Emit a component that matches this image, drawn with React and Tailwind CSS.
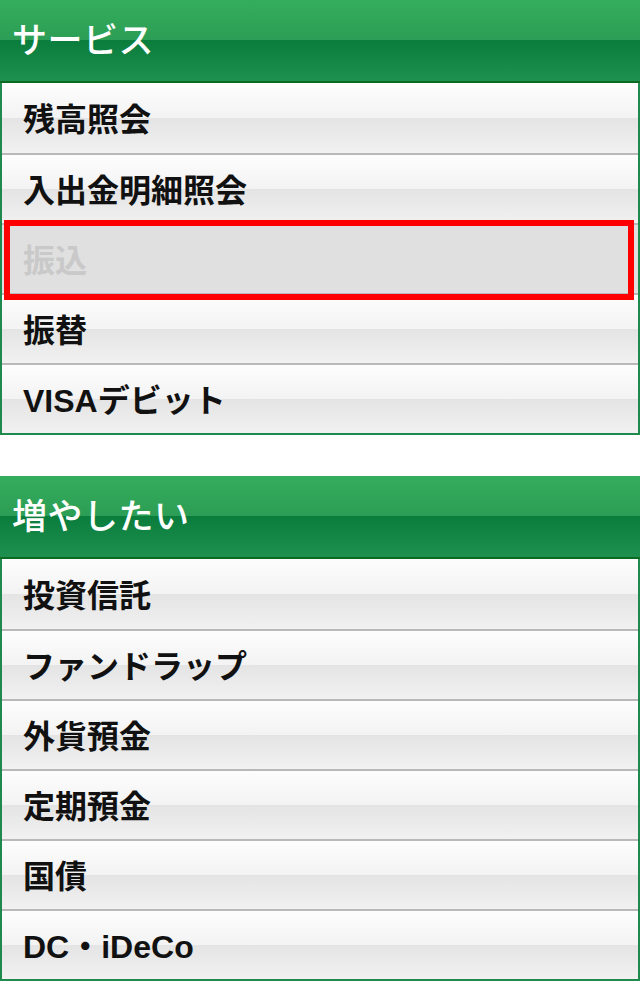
const font = { fontFamily: '"Liberation Sans", "Noto Sans CJK JP", sans-serif' };

const sections = [
  {
    title: 'サービス',
    items: [
      { label: '残高照会' },
      { label: '入出金明細照会' },
      { label: '振込', disabled: true, focused: true },
      { label: '振替' },
      { label: 'VISAデビット' },
    ],
  },
  {
    title: '増やしたい',
    items: [
      { label: '投資信託' },
      { label: 'ファンドラップ' },
      { label: '外貨預金' },
      { label: '定期預金' },
      { label: '国債' },
      { label: 'DC・iDeCo' },
    ],
  },
];

const Header = ({ title }) => (
  <div className="relative h-[83px] border-b-2 border-[#0b6a22] bg-[linear-gradient(to_bottom,#34ae5c_0%,#2c9d55_50%,#0a7d3d_50%,#1e9150_100%)] flex items-center pl-3">
    <span className="text-[35px] font-medium text-white leading-none tracking-[0.5px]">{title}</span>
  </div>
);

const Row = ({ label, disabled, focused, first }) => (
  <div
    className={`relative h-[70px] flex items-center pl-[21px] pt-1 ${first ? '' : 'border-t-2 border-[#b9b9b9]'} ${
      disabled
        ? 'bg-[#e0e0e0]'
        : 'bg-[linear-gradient(to_bottom,#fdfdfd_0%,#f3f3f3_50%,#e4e4e4_50%,#f1f1f1_100%)]'
    }`}
  >
    <span className={`text-[32px] font-bold leading-none ${disabled ? 'text-[#c9c9c9]' : 'text-[#111]'}`}>{label}</span>
    {focused && (
      <div className="absolute left-[2px] right-[4px] -top-[5px] -bottom-[7px] border-[6px] border-[#ff0000] z-10" />
    )}
  </div>
);

export default function App() {
  return (
    <div className="w-[640px] min-h-[984px] bg-white" style={font}>
      {sections.map((s, i) => (
        <div key={s.title} className={i > 0 ? 'mt-[41px]' : ''}>
          <Header title={s.title} />
          <div className="border-x-2 border-b-2 border-[#1f8a4e]">
            {s.items.map((it, j) => (
              <Row key={it.label} {...it} first={j === 0} />
            ))}
          </div>
        </div>
      ))}
    </div>
  );
}
